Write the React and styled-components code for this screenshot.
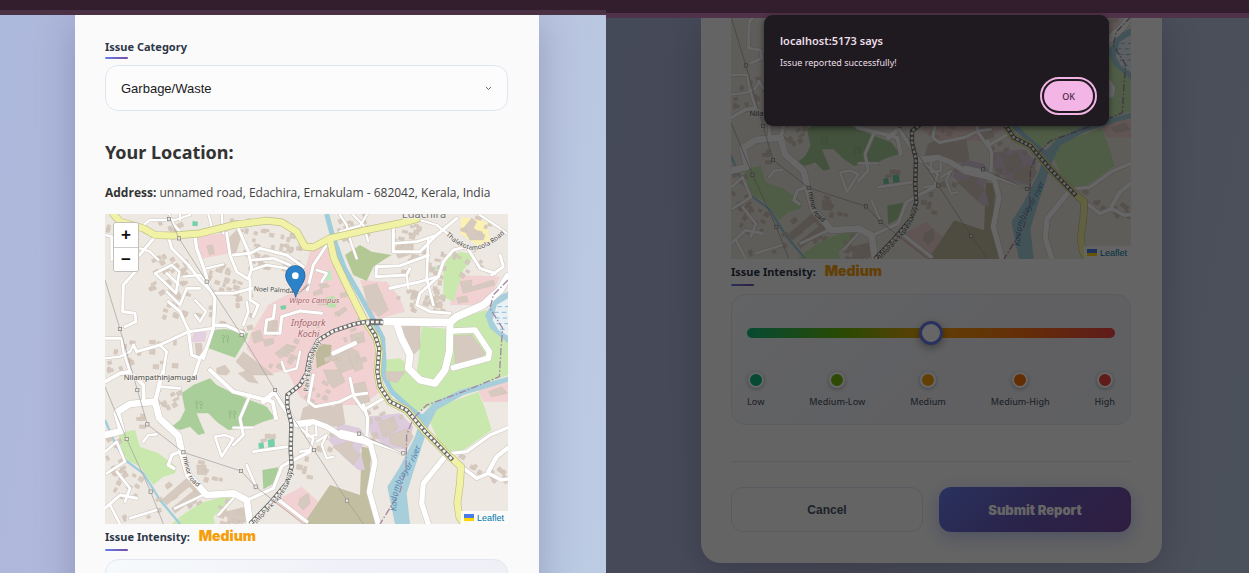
import React from "react";
import styled, { createGlobalStyle } from "styled-components";

const GlobalStyle = createGlobalStyle`
  * { box-sizing: border-box; }
  body { margin: 0; font-family: "Noto Sans", sans-serif; background: #b4c0de; }
  h2, p { margin: 0; }
`;

const Page = styled.main`
  display: grid;
  grid-template-columns: 606fr 643fr;
  height: 100vh;
  overflow: hidden;
`;

const Pane = styled.section`
  position: relative;
  display: flex;
  flex-direction: column;
  min-width: 0;
  overflow: hidden;
  background: linear-gradient(100deg, #acb8dc 0%, #b5b9da 45%, #bccce3 100%);
`;

const BrowserBar = styled.div`
  flex: none;
  height: ${(p) => p.$height}px;
  background: #331e2e;
  border-bottom: 5px solid ${(p) => p.$edge};
  z-index: 2;
`;

const CardArea = styled.div`
  padding: ${(p) => p.$padding};
`;

const Card = styled.form`
  padding: ${(p) => p.$padding};
  background: #fafafa;
  border-radius: ${(p) => (p.$rounded ? "0 0 20px 20px" : "0")};
  box-shadow: 0 8px 36px rgba(40, 40, 90, 0.25);
`;

const FieldLabel = styled.label`
  display: block;
  color: #2d3748;
  font-size: 11px;
  font-weight: 700;
  line-height: ${(p) => p.$line}px;
  margin-bottom: ${(p) => p.$gap}px;
  &::after {
    content: "";
    display: block;
    width: 23px;
    height: 2px;
    border-radius: 1px;
    background: linear-gradient(90deg, #667eea, #764ba2);
  }
`;

const Level = styled.span`
  margin-left: 6px;
  color: #f59e0b;
  font-family: Inter, sans-serif;
  font-size: 14px;
  font-weight: 900;
`;

const SelectWrap = styled.div`
  position: relative;
`;

const Select = styled.select`
  display: block;
  appearance: none;
  width: 100%;
  height: 46px;
  padding: 0 15px;
  border: 1px solid #e0e5f2;
  border-radius: 13px;
  background: #fcfcfd;
  color: #1a1a1a;
  font: 13px "Liberation Sans", sans-serif;
`;

const Chevron = styled.svg`
  position: absolute;
  right: 16px;
  top: 20px;
  pointer-events: none;
`;

const Heading = styled.h2`
  margin-top: 29px;
  color: #333;
  font-size: 18px;
  line-height: 24px;
`;

const Address = styled.p`
  margin: 19px 0 11px;
  color: #444;
  font-family: "Open Sans", sans-serif;
  font-size: 12px;
  line-height: 20px;
  white-space: nowrap;
  strong { color: #333; }
`;

const MapFrame = styled.div`
  position: relative;
  height: ${(p) => p.$height}px;
  overflow: hidden;
  background: #eee9e2;
`;

const MapSvg = styled.svg`
  display: block;
  width: 100%;
  height: 100%;
  font-family: "Noto Sans", sans-serif;
`;

const ZoomControls = styled.div`
  position: absolute;
  left: 8px;
  top: 8px;
  border: 1px solid #c3c0bc;
  border-radius: 3px;
  overflow: hidden;
`;

const ZoomButton = styled.button`
  display: block;
  width: 24px;
  height: 24px;
  padding: 0;
  border: 0;
  background: #fff;
  color: #111;
  font: bold 17px/22px "Liberation Sans", sans-serif;
  & + & { border-top: 1px solid #ccc; }
`;

const Attribution = styled.a`
  position: absolute;
  right: 0;
  bottom: 0;
  display: flex;
  align-items: center;
  gap: 3px;
  height: 13px;
  padding: 0 4px 0 3px;
  background: rgba(255, 255, 255, 0.8);
  color: #0078a8;
  font: 9px "Liberation Sans", sans-serif;
  text-decoration: none;
`;

const IntensityPanel = styled.div`
  display: flex;
  flex-direction: column;
  gap: 34px;
  padding: 33px 15px 15px;
  border: 1px solid #e2e6f1;
  border-radius: 14px;
  background: linear-gradient(135deg, #f7fafc, #f0f1f8 50%, #eef0f6);
`;

const Slider = styled.input`
  display: block;
  appearance: none;
  width: 100%;
  height: 10px;
  margin: 0;
  border-radius: 5px;
  background: linear-gradient(90deg, #10b981, #65b80c 25%, #f59e0b 50%, #f97316 75%, #ef4444);
  &::-webkit-slider-thumb {
    appearance: none;
    width: 24px;
    height: 24px;
    border: 3px solid #667eea;
    border-radius: 50%;
    background: #fff;
    box-shadow: 0 3px 9px rgba(0, 0, 0, 0.35);
  }
`;

const Scale = styled.div`
  display: flex;
  justify-content: space-between;
`;

const Step = styled.div`
  display: flex;
  flex-direction: column;
  align-items: center;
  gap: 7px;
  color: #555c6b;
  font-size: 9px;
  font-weight: 500;
  line-height: 14px;
`;

const Dot = styled.span`
  width: 16px;
  height: 16px;
  border: 2px solid #fff;
  border-radius: 50%;
  background: ${(p) => p.$color};
  box-shadow: 0 1px 4px rgba(0, 0, 0, 0.3);
`;

const Actions = styled.div`
  display: grid;
  grid-template-columns: 1fr 1fr;
  gap: 16px;
  margin-top: 36px;
  padding-top: 25px;
  border-top: 1px solid #e4e6ea;
`;

const ActionButton = styled.button`
  height: 45px;
  border: ${(p) => (p.$primary ? "0" : "1px solid #dbe2ee")};
  border-radius: 12px;
  background: ${(p) => (p.$primary ? "linear-gradient(135deg, #667eea, #6a58b8 50%, #764ba2)" : "#fafafa")};
  color: ${(p) => (p.$primary ? "#fff" : "#4a5568")};
  box-shadow: ${(p) => (p.$primary ? "0 5px 18px rgba(102, 126, 234, 0.4)" : "none")};
  font-family: ${(p) => (p.$primary ? "Inter" : '"Liberation Sans"')}, sans-serif;
  font-size: ${(p) => (p.$primary ? 13 : 12)}px;
  font-weight: ${(p) => (p.$primary ? 900 : 700)};
`;

const Backdrop = styled.div`
  position: absolute;
  inset: 18px 0 0;
  background: rgba(0, 0, 0, 0.6);
`;

const Dialog = styled.div`
  position: absolute;
  z-index: 3;
  top: 15px;
  left: 158px;
  right: 140px;
  display: flex;
  flex-direction: column;
  padding: 17px 16px 0;
  height: 111px;
  border-radius: 9px;
  background: #1f1a1f;
  color: #eadfe7;
  box-shadow: 0 2px 6px rgba(0, 0, 0, 0.5);
`;

const DialogTitle = styled.h2`
  font-size: 11px;
  font-weight: 600;
  line-height: 18px;
`;

const DialogText = styled.p`
  margin-top: 6px;
  font-size: 9px;
  line-height: 14px;
`;

const OkButton = styled.button`
  align-self: flex-end;
  width: 49px;
  height: 30px;
  margin: 11px 0 0;
  border: 0;
  border-radius: 15px;
  outline: 2px solid #f0b3e4;
  outline-offset: 2px;
  background: #f3b4e6;
  color: #4b2547;
  font: 500 9px "Noto Sans", sans-serif;
`;

const AREAS = [
  ["#f1d1d1", "280,95 375,85 387,145 300,162 285,120"],
  ["#f1d1d1", "560,270 610,215 632,130 690,115 800,345 835,430 840,560 790,600 740,600 640,605 600,575 560,495 500,510 440,430 450,390 505,300"],
  ["#f1d1d1", "780,225 860,230 900,280 915,320 840,340 815,330"],
  ["#f1d1d1", "1075,210 1200,215 1175,270 1140,300 1050,300"],
  ["#f1d1d1", "605,845 520,890 610,957 655,890"],
  ["#f1d1d1", "1130,545 1224,530 1224,590 1150,590"],
  ["#c9e8ae", "1040,160 1080,140 1125,150 1090,195 1060,290 1030,275 1030,205"],
  ["#c9e8ae", "965,365 1045,372 1060,345 1160,315 1180,370 1224,410 1224,510 1090,560 1000,600 950,620 890,580 850,500 850,465 900,460 950,500 955,470"],
  ["#c9e8ae", "985,640 1000,610 1135,560 1155,610 1175,675 1090,735 1030,740"],
  ["#c9e8ae", "55,685 105,675 120,725 175,745 230,785 225,805 190,815 160,840 120,785 70,760"],
  ["#c9e8ae", "240,935 300,895 370,875 400,880 340,935 345,957 215,957"],
  ["#a9ce9a", "340,375 375,372 445,385 440,400 405,458 325,430"],
  ["#a9ce9a", "330,520 350,540 380,555 450,585 500,605 525,640 490,650 445,670 385,675 350,650 325,625 290,625 300,650 315,685 295,690 270,665 240,675 215,665 240,645 255,615 245,565 280,540"],
  ["#a9ce9a", "487,795 535,787 530,830 490,853"],
  ["#b3c895", "735,150 780,120 815,140 875,150 850,165 820,185 800,228 760,210"],
  ["#c2bea1", "690,840 780,870 785,725 815,730 805,865 830,957 610,957"],
  ["#bdb99a", "645,415 695,420 690,470 650,490"],
  ["#fbf1b2", "1085,35 1160,50 1170,110 1130,120 1080,85"],
  ["#dccbdc", "685,705 720,655 780,670 800,700 780,735 795,795 775,795 730,755"],
  ["#dccbdc", "800,635 900,625 940,665 920,735 860,725 810,685"],
  ["#e5d0e0", "280,380 320,382 315,410 275,412"],
  ["#c0e8c0", "675,200 693,195 697,225 677,228"],
  ["#c0e8c0", "1000,185 1018,182 1020,193 1003,196"],
  ["#b6e3a9", "675,280 700,272 716,288 705,308 680,306"],
  ["#75cfa8", "278,48 294,50 292,64 277,62"],
  ["#75cfa8", "541,303 557,300 558,312 543,314"],
  ["#75cfa8", "475,715 490,711 493,732 477,734"],
  ["#75cfa8", "503,704 523,701 525,727 505,727"],
  ["#a6cfdb", "1224,515 1080,555 1000,595 965,630 945,695 900,785 862,845 885,957 930,957 920,865 945,785 985,665 1010,615 1090,570 1224,530"],
  ["#a6cfdb", "1224,260 1190,275 1155,330 1170,370 1224,415"],
  ["#e9f1f4", "1224,280 1190,300 1178,345 1195,375 1224,392"],
];

const BLOCKS = [
  "320,122 338,120 343,146 328,150", "498,345 533,347 530,385 498,380", "455,385 480,375 490,405 462,415",
  "525,445 560,418 590,425 575,440 540,460", "490,405 520,400 522,415 495,425", "350,490 375,480 390,500 380,510 350,508",
  "408,470 430,440 520,510 450,510", "640,262 665,250 668,265 642,272", "655,285 678,280 678,300 655,300",
  "705,325 735,305 742,315 715,335", "720,265 745,262 740,275 722,278", "655,240 680,235 690,245 665,250",
  "790,245 830,235 865,315 835,335 825,320 805,310", "1080,230 1115,225 1115,245 1180,225 1185,240 1090,265",
  "1070,278 1100,272 1105,290 1075,295", "900,365 960,362 960,430 940,450 915,430", "1062,392 1115,390 1155,445 1130,465 1065,475",
  "690,445 745,435 760,490 720,505", "750,390 790,380 795,410 755,420", "735,420 775,440 790,490 765,500",
  "855,500 915,500 890,533 860,525", "670,495 720,495 735,530 700,550 685,530", "750,540 795,530 810,590 770,600",
  "610,610 640,595 700,605 725,590 735,655 710,665 640,650 600,650", "698,725 760,705 755,725 780,750 760,780 735,755",
  "835,655 880,635 895,670 850,700", "870,690 925,670 940,695 920,730 870,715", "1165,560 1205,545 1222,565 1175,575",
  "600,880 625,865 630,895 610,915 595,900", "290,780 318,780 320,810 292,808", "185,885 260,820 280,835 200,900",
  "215,910 290,850 305,865 225,925", "415,505 445,495 475,535 445,530", "380,920 440,905 445,950 385,955",
  "1090,70 1115,40 1130,50 1120,70 1155,90 1150,105 1110,105", "880,130 920,110 940,120 940,145 895,160",
  "285,415 305,415 308,450 290,455", "385,100 410,75 425,90 405,150 390,140",
];

const CLUSTERS = [
  [200, 215, 110, 130, 34, -30], [225, 290, 70, 80, 12, 20], [520, 160, 180, 90, 32, 12], [370, 215, 90, 90, 18, 20],
  [60, 60, 80, 40, 5, 10], [190, 60, 90, 40, 7, -20], [520, 95, 170, 70, 14, 10], [150, 450, 220, 90, 12, 5],
  [60, 480, 80, 70, 7, -15], [960, 215, 140, 170, 36, 8], [920, 90, 120, 70, 14, 12], [1110, 170, 100, 90, 9, 30],
  [760, 70, 100, 90, 12, -25], [980, 290, 90, 60, 14, 20], [550, 400, 80, 150, 12, 25], [720, 400, 150, 160, 14, -20],
  [45, 760, 60, 130, 14, -28], [85, 830, 80, 90, 12, 30], [120, 910, 110, 60, 6, -20], [250, 870, 110, 70, 11, -35],
  [400, 910, 90, 80, 12, 20], [120, 630, 20, 70, 5, 0], [200, 570, 80, 70, 9, -30], [330, 790, 70, 60, 5, 15],
  [660, 540, 100, 90, 9, 25], [820, 620, 60, 70, 7, -25], [860, 665, 100, 80, 7, -25], [1110, 770, 60, 50, 6, 30],
  [1195, 800, 50, 40, 9, 40], [610, 780, 40, 60, 5, 10], [690, 710, 80, 60, 4, 20], [510, 690, 60, 30, 3, -5],
  [440, 320, 70, 110, 7, -15], [330, 330, 90, 60, 5, 10], [1140, 60, 120, 60, 5, 20], [410, 60, 110, 40, 7, -10],
];

const seeded = (seed) => () => {
  seed = (seed * 16807) % 2147483647;
  return seed / 2147483647;
};

const HOUSES = CLUSTERS.flatMap(([cx, cy, w, h, n, angle], c) => {
  const rnd = seeded(97 + c * 131);
  return Array.from({ length: n }, () => ({
    x: Math.round(cx + (rnd() - 0.5) * w),
    y: Math.round(cy + (rnd() - 0.5) * h),
    w: Math.round(8 + rnd() * 11),
    h: Math.round(7 + rnd() * 8),
    angle,
  }));
});

const ROADS = [
  [6, "130,60 150,45 225,45 270,30"], [7, "15,90 35,95 35,165"],
  [8, "165,95 110,160 110,195 70,240 68,320 105,325 108,350 75,365"], [6, "120,130 150,140 175,165"],
  [8, "205,95 215,130 265,180 300,225 340,265 400,265 455,250"], [7, "205,27 222,60 240,80"],
  [9, "285,95 290,130 315,200 325,240 345,280 340,370 310,460"],
  [8, "380,85 390,150 410,200 445,222 455,190 445,140 415,70"], [8, "400,150 450,145 480,130 560,150 610,185"],
  [7, "455,165 520,160 570,180"], [7, "455,195 500,180 560,190"], [8, "450,222 450,285 475,300 460,335"],
  [7, "440,290 445,320 430,360"], [6, "320,190 370,178"], [9, "340,360 380,362 430,385"],
  [7, "15,400 65,400 70,440 90,500"], [8, "100,420 110,440 180,420 265,380 340,370"],
  [9, "265,375 275,450 300,460 320,430"], [8, "205,290 240,320 265,375"],
  [7, "165,205 215,180 238,200 228,265 165,205"], [7, "200,205 235,238"], [7, "200,260 240,300 260,250 300,250"],
  [6, "285,285 318,320 300,350 285,330"], [7, "190,500 200,440 180,420"], [6, "15,460 60,455 90,440 100,420"],
  [9, "280,520 300,460"], [6, "250,215 300,210 325,240"], [6, "370,85 365,27"], [6, "325,27 335,65"], [6, "240,45 240,27"],
  [8, "525,300 520,340 500,345 495,385 540,385 545,335 600,318 665,325"], [6, "545,470 555,500 590,490 600,440"],
  [8, "622,255 640,180 680,120"], [7, "650,195 680,205 665,230"], [6, "720,30 740,60 752,110 770,160"],
  [6, "720,80 780,62 800,30"], [6, "760,30 790,60 805,110"], [8, "880,65 880,140 960,140 1010,90 1070,40"],
  [7, "880,115 950,110 1010,90"], [8, "830,185 900,182 960,160 985,150"], [8, "830,185 828,215 920,210 930,190"],
  [8, "870,250 960,230 1015,215 1030,170 1060,135 1100,125 1140,190 1185,205"],
  [8, "1015,215 960,265 950,300 990,320 1050,325"], [7, "985,100 980,220 1000,300"], [6, "960,45 1010,60 1060,100"],
  [6, "1140,30 1200,70 1220,85"], [8, "1200,150 1210,185 1175,210"], [6, "920,210 925,250"],
  [22, "850,350 1050,352 1070,335 1150,300 1200,255 1224,215"],
  [20, "890,355 905,400 930,450 925,490 960,525 1005,535 1035,495 1048,440 1050,355"],
  [16, "1055,378 1125,375 1168,440 1165,460 1060,488"], [12, "700,445 765,415"],
  [15, "590,655 640,650 680,665 720,690 780,700 812,720 825,770 808,860 835,957"], [26, "725,688 798,705"],
  [9, "790,600 803,640 800,700"], [8, "640,510 625,590 645,605 720,590 760,570 800,565"],
  [8, "750,520 762,575 790,615 860,575"], [6, "620,665 620,695 650,690 648,665"], [6, "650,710 680,690 665,720 680,760 700,755"],
  [7, "800,705 900,740"], [15, "1035,755 970,835 965,895 985,957"], [9, "1055,745 1100,740 1170,690 1224,668"],
  [10, "1085,785 1130,820 1165,805 1205,825 1224,822"], [12, "1165,800 1190,755 1224,728"],
  [19, "15,690 65,678 50,622 90,597 165,590 178,640 235,692 245,740 265,810 320,870 400,865 440,885 450,957"],
  [12, "165,590 180,530 190,500"], [10, "15,530 60,505 90,500 130,540 132,590"], [7, "180,545 240,550"],
  [11, "330,495 400,560 460,575 518,590 528,640"], [14, "490,590 525,560 548,600 590,660 630,655"],
  [8, "450,570 420,640 430,690 400,720"], [7, "345,695 375,690 400,700 365,755 345,695"], [6, "400,668 460,668"],
  [8, "460,740 560,725"], [7, "440,780 470,850"], [9, "240,740 215,750 205,780 222,790"], [7, "130,710 145,690 170,688"],
  [8, "15,910 60,870 110,880"], [7, "50,800 90,850 75,890"], [7, "30,900 60,957"], [7, "15,740 50,710 75,770 20,805"],
  [7, "90,940 170,915"], [9, "450,882 520,850 545,785 570,770 630,740"], [9, "530,880 620,950"],
  [7, "225,910 320,865"], [6, "355,930 400,880"], [7, "600,740 630,735 640,700 600,670"],
];

const MAIN_ROADS = [
  "40,27 60,50 130,70 165,90 220,92 300,85 400,60 500,47 545,52 590,80 615,125 640,127 690,100 800,75 900,55 950,42",
  "690,105 702,160 740,240 790,340 830,400 838,440 832,500 840,545 870,590 920,615 980,685 1050,755 1083,785 1080,835 1072,895 1078,935 1092,957",
];

const METRO = [
  "850,352 800,350 760,358 700,378 655,405 630,450 620,505 600,540 562,570 562,605 574,655 572,735 575,785 560,835 510,895 450,957",
  "800,352 825,390 838,430 832,500 840,545 870,590 920,615 980,685 1058,765",
];

const POWER = [
  "15,225 60,372 112,555 142,658 250,742 423,798 467,845 610,957",
  "15,545 80,702 152,860 190,957",
  "205,30 237,100 320,230 425,390 525,555 642,735 741,887 790,957",
  "777,686 910,745",
];
const PYLONS = [[60, 372], [112, 555], [142, 658], [250, 742], [423, 798], [467, 845], [80, 702], [152, 860], [237, 100], [320, 230], [425, 390], [525, 555], [642, 735], [741, 887], [777, 686], [910, 745], [207, 42]];

function StreetMap({ id, align, scrolled }) {
  return (
    <MapSvg viewBox="15 27 1209 930" preserveAspectRatio={align} role="img" aria-label="Map of Edachira">
      <rect x="15" y="27" width="1209" height="930" fill="#ede8e1" />
      {AREAS.map(([fill, points], i) => <polygon key={i} points={points} fill={fill} />)}
      <g stroke="#8fbcd6" strokeWidth="3" strokeDasharray="14 9">
        <path d="M1192 305H1224M1182 322H1224M1185 339H1224M1190 356H1224M1200 373H1224" />
      </g>
      <g fill="none" stroke="#a0cddb" strokeLinejoin="round">
        <polyline strokeWidth="15" points="680,27 697,90 733,190 785,280 815,335 848,400 852,470 850,510 875,560 930,610 975,645" />
        <polyline strokeWidth="7" points="15,645 45,715 75,765 130,805 180,885 240,957" />
      </g>
      <g fill="#d6c9bf" stroke="#cabaae" strokeWidth="1">
        {BLOCKS.map((points, i) => <polygon key={i} points={points} />)}
        {HOUSES.map((b, i) => (
          <rect key={i} x={b.x} y={b.y} width={b.w} height={b.h} transform={`rotate(${b.angle} ${b.x} ${b.y})`} />
        ))}
      </g>
      <g fill="none" strokeLinejoin="round" strokeLinecap="round">
        {ROADS.map(([w, points], i) => <polyline key={i} points={points} stroke="#cdc6c0" strokeWidth={w + 4} />)}
        {ROADS.map(([w, points], i) => <polyline key={i} points={points} stroke="#fff" strokeWidth={w + 1} />)}
        {MAIN_ROADS.map((points, i) => <polyline key={i} points={points} stroke="#bfc186" strokeWidth="23" />)}
        {MAIN_ROADS.map((points, i) => <polyline key={i} points={points} stroke="#f2f2a6" strokeWidth="19" />)}
      </g>
      <g fill="none" strokeLinejoin="round">
        {METRO.map((points, i) => <polyline key={i} points={points} stroke="#6b6b69" strokeWidth="13" />)}
        {METRO.map((points, i) => <polyline key={i} points={points} stroke="#f4f4f2" strokeWidth="8" strokeDasharray="9 5" />)}
        <path d="M808 343H848M808 359H848" stroke="#666" strokeWidth="3" />
        <path d="M1224 225L1180 270 1170 310 1208 370 1203 430 1198 515 1090 560 980 600 940 640 920 690 918 790 900 860 840 957" stroke="#a486a4" strokeWidth="4" strokeDasharray="22 6 5 6" />
        {POWER.map((points, i) => <polyline key={i} points={points} stroke="#a09c98" strokeWidth="2" />)}
      </g>
      <g fill="#e8e3dc" stroke="#85817d" strokeWidth="2">
        {PYLONS.map(([x, y]) => <rect key={`${x}-${y}`} x={x - 5} y={y - 5} width="10" height="10" />)}
      </g>
      <g fill="none" stroke="#82ad75" strokeWidth="2">
        {[[375, 402], [295, 600], [395, 628]].map(([x, y]) => (
          <path key={x} d={`M${x - 9} ${y - 8}l4-4 5 5-4 5-5-3M${x - 5} ${y}v12M${x + 3} ${y - 7}l5-4 5 6-4 5-5-3M${x + 8} ${y}v12`} />
        ))}
      </g>
      <defs>
        <path id={`${id}-minor`} d="M249 755Q258 810 272 828Q290 845 320 870" />
        <path id={`${id}-thal`} d="M1037 90Q1085 135 1125 135Q1170 130 1222 78" />
        <path id={`${id}-river`} d="M890 918Q885 850 925 800Q960 750 970 690" />
        <path id={`${id}-way`} d="M470 957L530 892Q580 835 585 760" />
        <path id={`${id}-way2`} d="M624 560Q632 450 668 400" />
      </defs>
      <g fill="#484848" stroke="#f4f0ea" strokeWidth="4" paintOrder="stroke" fontSize="20">
        <text><textPath href={`#${id}-minor`}>minor road</textPath></text>
        <text fontSize="19"><textPath href={`#${id}-way`}>InfoPark Express Way</textPath></text>
        <text x="71" y="525" fontSize="23">Nilampathinjamugal</text>
      </g>
      <text fontSize="25" fontStyle="italic" fill="#5c86b0"><textPath href={`#${id}-river`}>Kadambrayar river</textPath></text>
      {!scrolled && (
        <>
          <g fill="#484848" stroke="#f4f0ea" strokeWidth="4" paintOrder="stroke" fontSize="20">
            <text><textPath href={`#${id}-thal`}>Thalakotamoola Road</textPath></text>
            <text fontSize="19"><textPath href={`#${id}-way2`}>Park Express Way</textPath></text>
            <text x="461" y="258" transform="rotate(3 461 258)">Noel Palmdale</text>
            <text x="905" y="39" fontSize="33" fill="#777">Edachira</text>
          </g>
          <g fill="#a5616a" fontStyle="italic" stroke="#f6e0e0" strokeWidth="3" paintOrder="stroke">
            <text x="568" y="295" fontSize="23">Wipro Campus</text>
            <text x="573" y="363" fontSize="27">Infopark</text>
            <text x="593" y="395" fontSize="27">Kochi</text>
          </g>
          <path d="M587 273L630 240 624 234Z" fill="#000" opacity=".2" />
          <path d="M587 277C583 252 557 235 557 211A29 29 0 0 1 615 211C615 235 591 252 587 277Z" fill="#2b82c9" stroke="#2269a5" strokeWidth="3" />
          <circle cx="586" cy="212" r="10" fill="#fff" />
        </>
      )}
    </MapSvg>
  );
}

function LeafletLink() {
  return (
    <Attribution href="#leaflet">
      <svg width="10" height="7" viewBox="0 0 10 7" aria-hidden="true">
        <path fill="#4c7be1" d="M0 0h10v4H0z" />
        <path fill="#ffd500" d="M0 4h10v3H0z" />
      </svg>
      Leaflet
    </Attribution>
  );
}

const LEVELS = [
  ["Low", "#10b981"],
  ["Medium-Low", "#75b80c"],
  ["Medium", "#f59e0b"],
  ["Medium-High", "#f9730c"],
  ["High", "#ef4444"],
];

function Intensity({ id, levels = [] }) {
  return (
    <>
      <FieldLabel htmlFor={id} $line={24} $gap={8}>
        Issue Intensity: <Level>Medium</Level>
      </FieldLabel>
      <IntensityPanel>
        <Slider id={id} type="range" min="1" max="5" defaultValue="3" />
        <Scale>
          {levels.map(([name, color]) => (
            <Step key={name}>
              <Dot $color={color} />
              {name}
            </Step>
          ))}
        </Scale>
      </IntensityPanel>
    </>
  );
}

export default function App() {
  return (
    <>
      <GlobalStyle />
      <Page>
        <Pane>
          <BrowserBar $height={15} $edge="#4a3244" />
          <CardArea $padding="0 67px 0 75px">
            <Card $padding="22px 31px 30px 30px">
              <FieldLabel htmlFor="category" $line={20} $gap={6}>Issue Category</FieldLabel>
              <SelectWrap>
                <Select id="category" defaultValue="garbage">
                  <option value="garbage">Garbage/Waste</option>
                </Select>
                <Chevron width="7" height="7" viewBox="0 0 7 7" fill="none" stroke="#666" aria-hidden="true">
                  <path d="M1 2l2.5 2.5L6 2" />
                </Chevron>
              </SelectWrap>
              <Heading>Your Location:</Heading>
              <Address><strong>Address:</strong> unnamed road, Edachira, Ernakulam - 682042, Kerala, India</Address>
              <MapFrame $height={310}>
                <StreetMap id="full" align="xMinYMin slice" />
                <ZoomControls>
                  <ZoomButton type="button" aria-label="Zoom in">+</ZoomButton>
                  <ZoomButton type="button" aria-label="Zoom out">−</ZoomButton>
                </ZoomControls>
                <LeafletLink />
              </MapFrame>
              <Intensity id="intensity-edit" />
            </Card>
          </CardArea>
        </Pane>
        <Pane>
          <BrowserBar $height={18} $edge="#50334a" />
          <CardArea $padding="0 87px 0 95px">
            <Card $padding="0 31px 31px 30px" $rounded>
              <MapFrame $height={241}>
                <StreetMap id="scrolled" align="xMinYMax slice" scrolled />
                <LeafletLink />
              </MapFrame>
              <Intensity id="intensity-sent" levels={LEVELS} />
              <Actions>
                <ActionButton type="button">Cancel</ActionButton>
                <ActionButton type="button" $primary>Submit Report</ActionButton>
              </Actions>
            </Card>
          </CardArea>
          <Backdrop />
          <Dialog role="alertdialog" aria-labelledby="alert-title" aria-describedby="alert-text">
            <DialogTitle id="alert-title">localhost:5173 says</DialogTitle>
            <DialogText id="alert-text">Issue reported successfully!</DialogText>
            <OkButton type="button">OK</OkButton>
          </Dialog>
        </Pane>
      </Page>
    </>
  );
}
